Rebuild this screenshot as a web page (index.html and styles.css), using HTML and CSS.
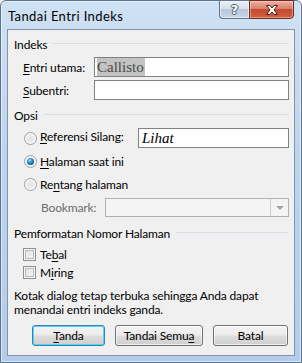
FILE: index.html
```html
<!DOCTYPE html>
<html lang="id">
<head>
  <meta charset="UTF-8">
  <title>Tandai Entri Indeks</title>
  <link rel="stylesheet" href="styles.css">
</head>
<body>
  <div class="window">
    <div class="titlebar">
      <div class="title">Tandai Entri Indeks</div>
      <div class="caption-btns">
        <div class="cap-help"><span>?</span></div>
        <div class="cap-close">
          <svg width="16" height="12" viewBox="0 0 16 12">
            <path d="M2.5 1.5 L6 1.5 L8 4 L10 1.5 L13.5 1.5 L10 6 L13.5 10.5 L10 10.5 L8 8 L6 10.5 L2.5 10.5 L6 6 Z" fill="#fff" stroke="#5a1c14" stroke-width="1" stroke-linejoin="round"/>
          </svg>
        </div>
      </div>
    </div>

    <div class="client">
      <!-- Indeks -->
      <div class="group-head head-indeks"><span>Indeks</span><i class="line"></i></div>
      <div class="field row-entri">
        <label class="lbl"><u>E</u>ntri utama:</label>
        <div class="input serif"><span class="sel">Callisto</span></div>
      </div>
      <div class="field row-sub">
        <label class="lbl"><u>S</u>ubentri:</label>
        <div class="input"></div>
      </div>

      <!-- Opsi -->
      <div class="group-head head-opsi"><span>Opsi</span><i class="line"></i></div>
      <div class="opt row-ref">
        <span class="radio"></span>
        <label class="opt-lbl ref-lbl"><u>R</u>eferensi Silang:</label>
        <div class="input serif italic ref-input">Lihat</div>
      </div>
      <div class="opt row-hal">
        <span class="radio on"></span>
        <label class="opt-lbl"><u>H</u>alaman saat ini</label>
      </div>
      <div class="opt row-ren">
        <span class="radio"></span>
        <label class="opt-lbl">Re<u>n</u>tang halaman</label>
      </div>
      <div class="opt row-book">
        <label class="book-lbl">Bookmark:</label>
        <div class="combo"><span class="drop"><i class="arrow"></i></span></div>
      </div>

      <!-- Pemformatan -->
      <div class="group-head head-fmt"><span>Pemformatan Nomor Halaman</span><i class="line"></i></div>
      <div class="check row-tebal">
        <span class="box"></span>
        <label>Te<u>b</u>al</label>
      </div>
      <div class="check row-miring">
        <span class="box"></span>
        <label>M<u>i</u>ring</label>
      </div>

      <p class="note">Kotak dialog tetap terbuka sehingga Anda dapat menandai entri indeks ganda.</p>

      <div class="buttons">
        <button class="btn default w-tanda"><u>T</u>anda</button>
        <button class="btn w-semua">Tandai Semu<u>a</u></button>
        <button class="btn w-batal">Batal</button>
      </div>
    </div>
  </div>
</body>
</html>
```

FILE: styles.css
```css
html, body {
  margin: 0;
  padding: 0;
}
body {
  font-family: 'Lato', 'Noto Sans', sans-serif;
  font-size: 12px;
  letter-spacing: -0.15px;
  color: #000;
  background: #fff;
}
u {
  text-decoration: underline;
  text-underline-offset: 2px;
}

/* frame */
.window {
  width: 302px;
  height: 363px;
  box-sizing: border-box;
  border: 1px solid #5a7391;
  border-radius: 6px 6px 0 0;
  background: linear-gradient(to bottom, #cfe1f4 0, #bfd5ee 40%, #b3cce9 100%);
  box-shadow: inset 0 0 0 1px rgba(255,255,255,0.55);
  display: flex;
  flex-direction: column;
}
.titlebar {
  height: 28px;
  display: flex;
  align-items: flex-start;
  padding-left: 7px;
}
.title {
  margin-top: 7px;
  line-height: 16px;
  font-size: 13px;
  letter-spacing: 0.4px;
  color: #000;
}
.caption-btns {
  margin-left: auto;
  margin-right: 7px;
  margin-top: -1px;
  display: flex;
}
.cap-help, .cap-close {
  height: 19px;
  box-sizing: border-box;
  display: flex;
  align-items: center;
  justify-content: center;
}
.cap-help {
  width: 30px;
  border: 1px solid #5f7690;
  border-right: none;
  border-radius: 0 0 0 4px;
  background: linear-gradient(to bottom, #e8eff7 0, #d6e1ed 45%, #b9c9db 50%, #c8d6e5 100%);
  box-shadow: inset 0 0 0 1px rgba(255,255,255,0.5);
}
.cap-help span {
  font-family: 'DejaVu Sans', sans-serif;
  font-weight: bold;
  font-size: 13px;
  line-height: 15px;
  color: #fff;
  text-shadow: 1px 0 0 #4a5a6c, -1px 0 0 #4a5a6c, 0 1px 0 #4a5a6c, 0 -1px 0 #4a5a6c;
}
.cap-close {
  width: 45px;
  border: 1px solid #6e2d22;
  border-radius: 0 0 4px 0;
  background: linear-gradient(to bottom, #eab1a4 0, #d9806c 45%, #c44a30 50%, #d2603f 100%);
  box-shadow: inset 0 0 0 1px rgba(255,220,210,0.45);
}

.client {
  flex: 1;
  margin: 0 6px 6px;
  border: 1px solid #8194aa;
  background: #f0f0f0;
  padding: 0 5px 0 6px;
  display: flex;
  flex-direction: column;
}

/* group headers */
.group-head {
  height: 16px;
  display: flex;
  align-items: center;
  gap: 6px;
  color: #000;
}
.group-head .line {
  flex: 1;
  height: 0;
  border-top: 1px solid #d5dfe5;
  margin-top: -1px;
}
.head-indeks { margin-top: 6px; }
.head-opsi { margin-top: 7px; }
.head-fmt { margin-top: 8px; }

/* text fields */
.field {
  display: flex;
  align-items: center;
  height: 20px;
  padding-left: 9px;
}
.row-entri { margin-top: 5px; }
.row-sub { margin-top: 3px; }
.lbl {
  width: 71px;
  flex: none;
}
.input {
  flex: 1;
  height: 20px;
  box-sizing: border-box;
  border: 1px solid #7f8388;
  background: #fff;
  padding: 0 2px;
  display: flex;
  align-items: center;
}
.serif {
  font-family: 'Liberation Serif', serif;
  font-size: 15px;
  letter-spacing: 0;
}
.italic { font-style: italic; }
.sel {
  background: #c3c3c3;
  color: #4a4a4a;
  height: 18px;
  line-height: 18px;
  padding-right: 1px;
}

/* options */
.opt {
  display: flex;
  align-items: center;
  height: 20px;
  padding-left: 10px;
}
.row-ref { margin-top: 5px; }
.row-hal { margin-top: 3px; }
.row-ren { margin-top: 3px; }
.row-book {
  margin-top: 4px;
  height: 19px;
  padding-left: 27px;
}
.radio {
  width: 13px;
  height: 13px;
  box-sizing: border-box;
  border-radius: 50%;
  border: 1px solid #9a9ea3;
  background: radial-gradient(circle at 50% 50%, #e2e2e2 0, #ececec 45%, #f9f9f9 100%);
  box-shadow: inset 0 0 0 1px #fafafa;
  flex: none;
  display: flex;
  align-items: center;
  justify-content: center;
}
.radio.on::after {
  content: "";
  width: 7px;
  height: 7px;
  border-radius: 50%;
  background: radial-gradient(circle at 40% 35%, #9be0fa 0, #2b8ac8 40%, #0d4e8c 80%);
}
.opt-lbl {
  margin-left: 3px;
}
.ref-lbl {
  width: 98px;
  flex: none;
  margin-bottom: 3px;
}
.ref-input {
  padding-left: 3px;
}
.book-lbl {
  width: 64px;
  flex: none;
  color: #6d6d6d;
}
.combo {
  flex: 1;
  height: 19px;
  box-sizing: border-box;
  border: 1px solid #aeb1b5;
  background: #f4f4f4;
  display: flex;
  justify-content: flex-end;
}
.drop {
  width: 17px;
  border-left: 1px solid #c9cbce;
  display: flex;
  align-items: center;
  justify-content: center;
}
.arrow {
  width: 0;
  height: 0;
  border-left: 4px solid transparent;
  border-right: 4px solid transparent;
  border-top: 4px solid #a3a3a3;
}

/* checkboxes */
.check {
  display: flex;
  align-items: center;
  height: 18px;
  padding-left: 9px;
}
.row-tebal { margin-top: 4px; }
.box {
  width: 13px;
  height: 13px;
  box-sizing: border-box;
  border: 1px solid #8e8f8f;
  box-shadow: inset 0 0 0 1px #f5f5f5, inset 0 0 0 2px #b9bcc0;
  margin-right: 4px;
  flex: none;
  background: linear-gradient(to bottom right, #dedede, #f7f7f7);
}

.note {
  margin: 8px 0 0;
  line-height: 14px;
}

/* buttons */
.buttons {
  display: flex;
  gap: 10px;
  margin-top: 8px;
  padding-left: 18px;
}
.btn {
  height: 21px;
  box-sizing: border-box;
  border: 1px solid #707070;
  border-radius: 3px;
  background: linear-gradient(to bottom, #f3f3f3 0, #ebebeb 48%, #dddddd 52%, #cfcfcf 100%);
  box-shadow: inset 0 0 0 1px rgba(255,255,255,0.7);
  font-family: inherit;
  font-size: 12px;
  letter-spacing: inherit;
  color: #000;
  padding: 0;
}
.btn.default {
  border-color: #3c7fb1;
  box-shadow: inset 0 0 0 1px #48d8fb;
}
.w-tanda { width: 73px; }
.w-semua { width: 88px; }
.w-batal { width: 75px; }
```
